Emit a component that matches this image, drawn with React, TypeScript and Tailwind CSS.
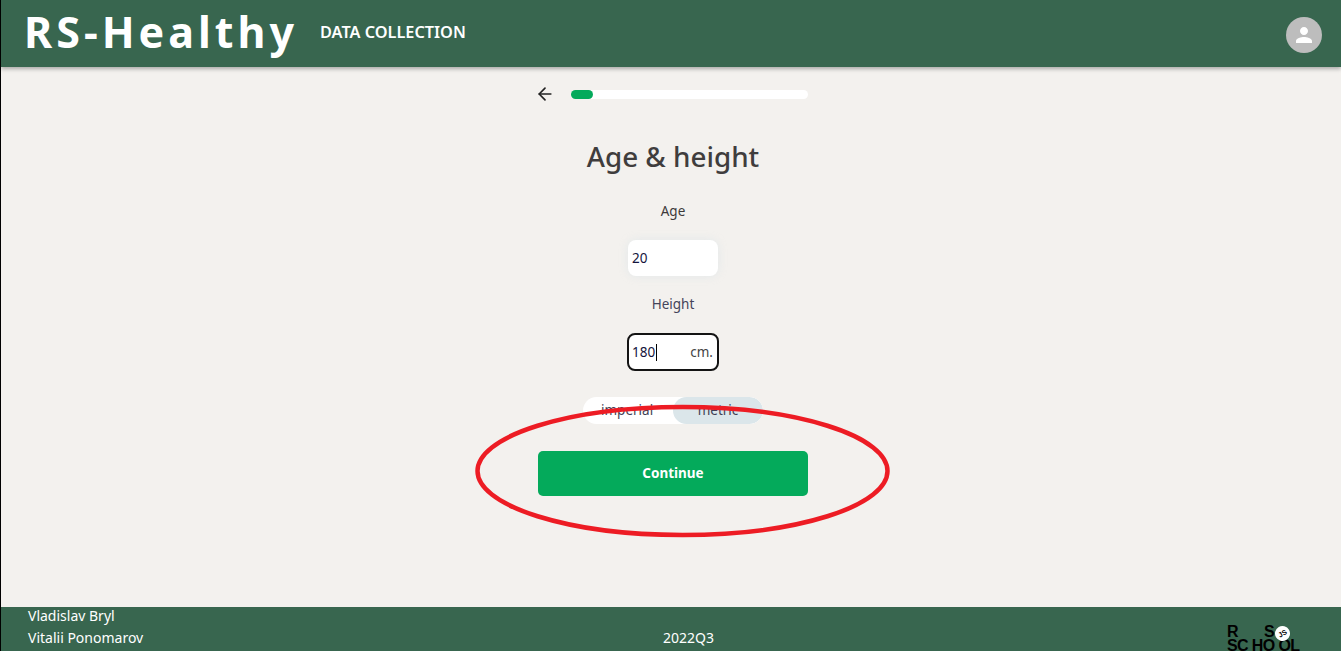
import { ArrowLeft } from "lucide-react";

const FONT = "font-['Noto_Sans','Open_Sans',sans-serif]";

function Header() {
  return (
    <header className="relative z-10 flex h-[67px] shrink-0 items-center bg-[#38664f] pl-[23px] pr-[19px] shadow-[0_2px_4px_rgba(0,0,0,0.3)]">
      <h1 className="-mt-[4px] w-[296px] text-[43px] font-bold leading-none tracking-[4px] text-white">RS-Healthy</h1>
      <span className="-mt-[2px] text-[16.3px] font-semibold text-white">DATA COLLECTION</span>
      <div className="ml-auto mt-[2px] flex h-9 w-9 items-center justify-center rounded-full bg-[#bdbdbd]">
        <svg viewBox="0 0 24 24" className="h-6 w-6 fill-white">
          <path d="M12 12c2.21 0 4-1.79 4-4s-1.79-4-4-4-4 1.79-4 4 1.79 4 4 4zm0 2c-2.67 0-8 1.34-8 4v2h16v-2c0-2.66-5.33-4-8-4z" />
        </svg>
      </div>
    </header>
  );
}

function Progress() {
  return (
    <div className="flex items-center">
      <ArrowLeft className="mr-[16px] h-[20px] w-[20px] text-[#222]" strokeWidth={2} />
      <div className="h-[9px] w-[237px] rounded-full bg-white">
        <div className="h-[9px] w-[22px] rounded-full bg-[#04aa5b]" />
      </div>
    </div>
  );
}

function Footer() {
  return (
    <footer className="relative flex h-11 shrink-0 bg-[#38664f] pl-[27px] pr-[40px] text-[14px] text-white">
      <div className="-mt-[2px] w-[635px] leading-[22px]">
        <div>Vladislav Bryl</div>
        <div>Vitalii Ponomarov</div>
      </div>
      <div className="mt-[20px] leading-[22px]">2022Q3</div>
      <div className="ml-auto mt-[18px] h-[26px] w-[74px] overflow-hidden font-['Liberation_Sans',sans-serif] text-[16px] font-bold leading-[14px] text-black">
        <div className="relative flex">
          <span className="w-[37px] tracking-tight">R</span>
          <span>S</span>
          <span className="absolute left-[48px] top-[1px] flex h-[15px] w-[15px] rotate-[-30deg] items-center justify-center rounded-full bg-white text-[7px] leading-none">JS</span>
        </div>
        <div className="tracking-[-0.6px]">SC HO OL</div>
      </div>
    </footer>
  );
}

export default function App() {
  return (
    <div className={`relative flex h-screen flex-col overflow-hidden border-l border-black bg-[#f3f1ee] ${FONT}`}>
      <Header />
      <main className="flex flex-1 flex-col items-center pl-[4px] pt-[17px] text-[#3d3a3a]">
        <div className="-ml-[3px]">
          <Progress />
        </div>
        <h2 className="mt-[33px] text-[27.8px] font-medium leading-[38px] text-[#3f3d3d]">Age &amp; height</h2>
        <label className="mt-[26px] text-[13.5px] leading-5">Age</label>
        <div className="mt-[19px] flex h-[36px] w-[90px] items-center rounded-lg bg-white pl-1 text-[13.5px] text-[#14143c] shadow-[0_0_8px_rgba(220,228,232,0.7)]">20</div>
        <label className="mt-[18px] text-[13.5px] leading-5 text-[#44445a]">Height</label>
        <div className="mt-[19px] flex h-[38px] w-[92px] items-center rounded-lg border-2 border-[#141414] bg-white pl-[3px] pr-1 text-[13.5px] text-[#14143c]">
          <span>180</span>
          <span className="ml-[1px] h-[17px] w-px bg-black" />
          <span className="ml-auto text-[#444]">cm.</span>
        </div>
        <div className="mt-[26px] flex h-[27px] w-[180px] overflow-hidden rounded-full bg-white text-[13.5px] leading-[27px] text-[#3f3f55]">
          <span className="w-[90px] pl-[18px]">imperial</span>
          <span className="w-[90px] rounded-full bg-[#dbe6ea] text-center">metric</span>
        </div>
        <button className="mt-[27px] h-[45px] w-[270px] rounded-[5px] bg-[#04aa5b] text-[13.5px] font-bold text-white">Continue</button>
      </main>
      <Footer />
      {/* hand-drawn annotation over the button */}
      <svg className="pointer-events-none absolute left-[-1px] top-0 z-20" width="1341" height="651">
        <ellipse cx="682.5" cy="471" rx="205" ry="64" fill="none" stroke="#ed1c24" strokeWidth="4.5" />
      </svg>
    </div>
  );
}
